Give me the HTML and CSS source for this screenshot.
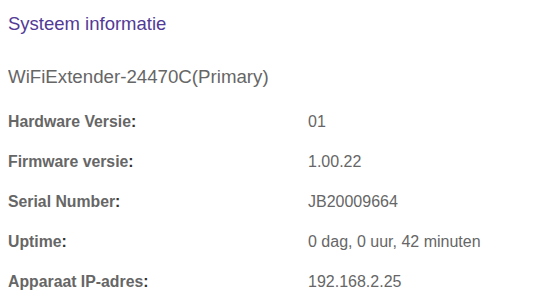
FILE: index.html
```html
<!DOCTYPE html>
<html>
<head>
  <title>Systeem informatie</title>
  <link rel="stylesheet" href="styles.css">
</head>
<body>
  <div class="page">
    <h1 class="title">Systeem informatie</h1>
    <h2 class="device">WiFiExtender-24470C(Primary)</h2>

    <div class="info">
      <div class="label">Hardware Versie<span class="colon">:</span></div>
      <div class="value">01</div>

      <div class="label">Firmware versie<span class="colon">:</span></div>
      <div class="value">1.00.22</div>

      <div class="label">Serial Number<span class="colon">:</span></div>
      <div class="value">JB20009664</div>

      <div class="label">Uptime<span class="colon">:</span></div>
      <div class="value">0 dag, 0 uur, 42 minuten</div>

      <div class="label">Apparaat IP-adres<span class="colon">:</span></div>
      <div class="value">192.168.2.25</div>
    </div>
  </div>
</body>
</html>
```

FILE: styles.css
```css
body {
  margin: 8px;
  font-family: "Liberation Sans", Arial, sans-serif;
  color: #666;
  background: #fff;
}

.page {
  padding-top: 5px;
}

.title {
  margin: 0;
  font-size: 18.5px;
  line-height: 22px;
  font-weight: normal;
  color: #523a96;
}

.device {
  margin: 31px 0 0;
  font-size: 18.7px;
  line-height: 22px;
  font-weight: normal;
  color: #666;
}

.info {
  display: grid;
  grid-template-columns: 300px auto;
  margin-top: 14px;
}

.label {
  font-size: 15.8px;
  font-weight: bold;
  line-height: 40px;
  color: #666;
}

.colon {
  color: #333;
}

.value {
  font-size: 16px;
  line-height: 40px;
  color: #666;
}
```
